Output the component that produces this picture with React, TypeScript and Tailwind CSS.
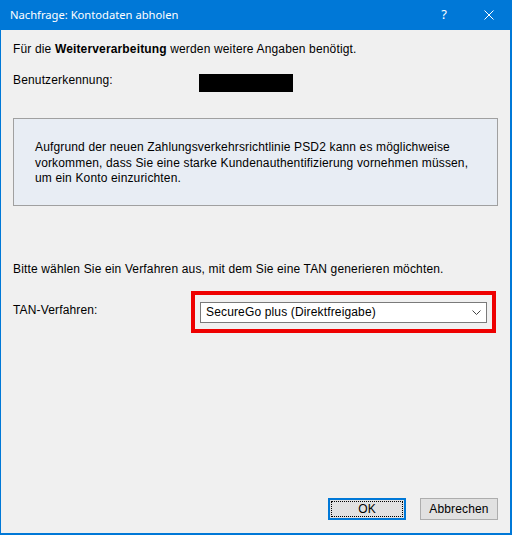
import React from "react";

export default function App() {
  const f = { fontFamily: '"Liberation Sans", Arial, sans-serif' };
  return (
    <div className="w-[512px] h-[535px] flex flex-col bg-[#0078d7] pl-px pr-[2px] pb-[2px] text-[12px] leading-[15px] text-black" style={f}>
      <div className="h-[30px] shrink-0 flex items-center text-white" style={{ fontFamily: '"Noto Sans", "Open Sans", sans-serif' }}>
        <span className="ml-[9px] text-[11.2px] leading-[15px] -mt-[1px]">Nachfrage: Kontodaten abholen</span>
        <span className="ml-auto mr-[37px] text-[13px] leading-[15px] -mt-[1px]">?</span>
        <svg width="10" height="10" viewBox="0 0 10 10" className="mr-[16px] -mt-[1px]">
          <path d="M0.5 0.5 L9.5 9.5 M9.5 0.5 L0.5 9.5" stroke="white" strokeWidth="1" fill="none" />
        </svg>
      </div>
      <div className="flex-1 flex flex-col bg-[#f0f0f0] pl-[12px] pr-[12px] tracking-[0.15px]">
        <div className="mt-[12px]">
          Für die <b>Weiterverarbeitung</b> werden weitere Angaben benötigt.
        </div>
        <div className="mt-[16px] flex">
          <div className="w-[186px]">Benutzerkennung:</div>
          <div className="mt-[1px] w-[94px] h-[18px] bg-black" />
        </div>
        <div className="mt-[26px] w-[485px] h-[88px] border border-[#a0a0a0] bg-[#e8edf4] pl-[21px] pt-[21px] leading-[15.5px]">
          Aufgrund der neuen Zahlungsverkehrsrichtlinie PSD2 kann es möglichweise
          <br />
          vorkommen, dass Sie eine starke Kundenauthentifizierung vornehmen müssen,
          <br />
          um ein Konto einzurichten.
        </div>
        <div className="mt-[56px]">
          Bitte wählen Sie ein Verfahren aus, mit dem Sie eine TAN generieren möchten.
        </div>
        <div className="mt-[14px] flex">
          <div className="w-[178px] pt-[12px]">TAN-Verfahren:</div>
          <div className="w-[305px] h-[42px] border-4 border-[#ee0000] pl-[5px] pt-[7px]">
            <div className="w-[287px] h-[21px] border border-[#7a7a7a] bg-white flex items-center pl-[5px]">
              <span className="flex-1">SecureGo plus (Direktfreigabe)</span>
              <svg width="9" height="5" viewBox="0 0 9 5" className="mr-[5px]">
                <path d="M0.5 0.5 L4.5 4.5 L8.5 0.5" stroke="#444" strokeWidth="1" fill="none" />
              </svg>
            </div>
          </div>
        </div>
        <div className="mt-auto mb-[13px] flex justify-end gap-[14px]">
          <div className="w-[78px] h-[22px] border-2 border-[#0078d7] bg-[#e1e1e1] p-px">
            <div className="w-full h-full border border-dotted border-black flex items-center justify-center">OK</div>
          </div>
          <div className="w-[78px] h-[22px] border border-[#adadad] bg-[#e1e1e1] flex items-center justify-center">Abbrechen</div>
        </div>
      </div>
    </div>
  );
}
